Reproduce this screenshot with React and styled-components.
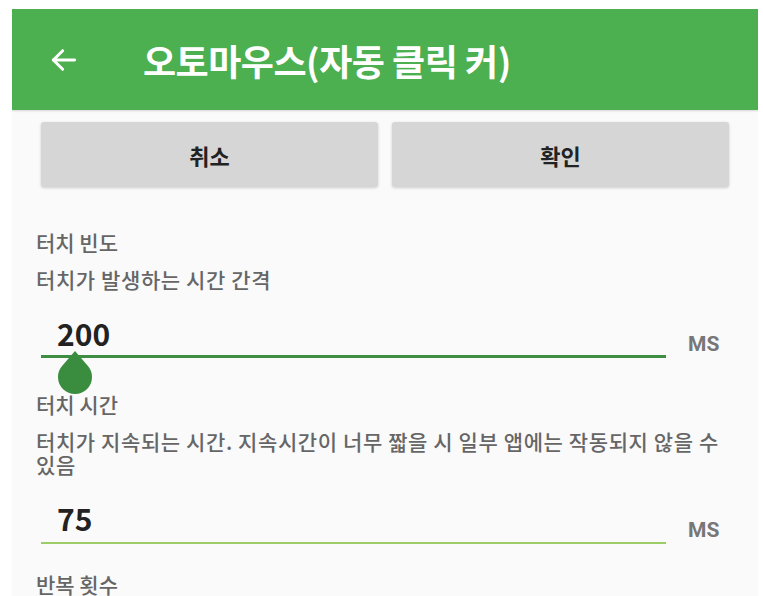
import React from 'react'
import styled, { createGlobalStyle } from 'styled-components'

const Global = createGlobalStyle`
  body {
    margin: 0;
    background: #ffffff;
    font-family: "Noto Sans CJK KR", "Noto Sans", sans-serif;
  }
`

function BackArrow() {
  return (
    <svg width="32" height="32" viewBox="0 0 24 24" fill="none" stroke="#fff" strokeWidth="2.2" strokeLinecap="round" strokeLinejoin="round">
      <path d="M20 12H4" />
      <path d="M11 5l-7 7 7 7" />
    </svg>
  )
}

function Thumb() {
  return (
    <svg width="36" height="44" viewBox="0 0 36 44">
      <path d="M18 0 L30.5 14.5 A17 17 0 1 1 5.5 14.5 Z" fill="#3a8c3f" />
    </svg>
  )
}

function App() {
  return (
    <>
      <Global />
      <Screen>
        <Header>
          <BackArrow />
          <Title>오토마우스(자동 클릭 커)</Title>
        </Header>
        <Body>
          <ButtonRow>
            <ActionButton>취소</ActionButton>
            <ActionButton>확인</ActionButton>
          </ButtonRow>

          <Section gap="43px">
            <Label>터치 빈도</Label>
            <Desc>터치가 발생하는 시간 간격</Desc>
            <InputRow>
              <Field active>
                <Value>200</Value>
                <ThumbWrap><Thumb /></ThumbWrap>
              </Field>
              <Unit>MS</Unit>
            </InputRow>
          </Section>

          <Section gap="34px">
            <Label>터치 시간</Label>
            <Desc>터치가 지속되는 시간. 지속시간이 너무 짧을 시 일부 앱에는 작동되지 않을 수 있음</Desc>
            <InputRow>
              <Field>
                <Value>75</Value>
              </Field>
              <Unit>MS</Unit>
            </InputRow>
          </Section>

          <Section gap="28px">
            <Label>반복 횟수</Label>
          </Section>
        </Body>
      </Screen>
    </>
  )
}

export default App

const Screen = styled.div`
  margin: 9px 0 0 12px;
  width: 746px;
  height: 587px;
  background: #fafafa;
  overflow: hidden;
`

const Header = styled.div`
  height: 101px;
  background: #4caf50;
  display: flex;
  align-items: center;
  padding-left: 36px;
  box-shadow: 0 1px 2px rgba(0,0,0,0.15);
`

const Title = styled.div`
  margin-left: 63px;
  color: #fff;
  font-size: 36px;
  font-weight: 700;
  letter-spacing: -0.5px;
  white-space: nowrap;
`

const Body = styled.div`
  padding: 12px 29px 0 24px;
`

const ButtonRow = styled.div`
  display: flex;
  gap: 14px;
  padding-left: 5px;
`

const ActionButton = styled.div`
  flex: 1;
  height: 65px;
  background: #d6d6d6;
  border-radius: 3px;
  box-shadow: 0 1px 3px rgba(0,0,0,0.18);
  display: flex;
  align-items: center;
  justify-content: center;
  font-size: 22px;
  font-weight: 700;
  color: #222;
`

const Section = styled.div`
  margin-top: ${p => p.gap};
`

const Label = styled.div`
  font-size: 21px;
  font-weight: 500;
  color: #666;
  line-height: 24px;
`

const Desc = styled.div`
  margin-top: 14px;
  font-size: 21px;
  font-weight: 500;
  color: #666;
  line-height: 23px;
  letter-spacing: 0.6px;
`

const InputRow = styled.div`
  display: flex;
  align-items: flex-end;
  margin-top: 24px;
  padding-left: 5px;
`

const Field = styled.div`
  position: relative;
  box-sizing: border-box;
  width: 625px;
  border-bottom: ${p => (p.active ? '3px solid #3e8e41' : '2px solid #9ccc65')};
  padding: 0 0 ${p => (p.active ? '4px' : '6px')} 16px;
`

const Value = styled.div`
  font-size: 30px;
  font-weight: 700;
  color: #222;
  line-height: 36px;
`

const ThumbWrap = styled.div`
  position: absolute;
  left: 16px;
  top: 100%;
  margin-top: -4px;
  line-height: 0;
`

const Unit = styled.div`
  margin-left: 22px;
  margin-bottom: 2px;
  font-size: 21px;
  font-weight: 700;
  color: #777;
  line-height: 24px;
  font-family: "Roboto", sans-serif;
`
